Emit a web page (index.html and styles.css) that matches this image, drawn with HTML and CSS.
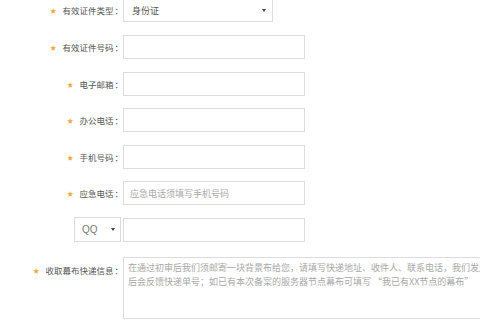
FILE: index.html
```html
<!DOCTYPE html>
<html lang="zh-CN">
<head>
<meta charset="utf-8">
<link rel="stylesheet" href="styles.css">
</head>
<body>
<form class="form">
  <div class="row">
    <label class="label"><span class="star">★</span>有效证件类型<span class="colon">：</span></label>
    <div class="select select-wide"><span class="select-text">身份证</span></div>
  </div>
  <div class="row">
    <label class="label"><span class="star">★</span>有效证件号码<span class="colon">：</span></label>
    <input class="input" type="text">
  </div>
  <div class="row">
    <label class="label"><span class="star">★</span>电子邮箱<span class="colon">：</span></label>
    <input class="input" type="text">
  </div>
  <div class="row">
    <label class="label"><span class="star">★</span>办公电话<span class="colon">：</span></label>
    <input class="input" type="text">
  </div>
  <div class="row">
    <label class="label"><span class="star">★</span>手机号码<span class="colon">：</span></label>
    <input class="input" type="text">
  </div>
  <div class="row">
    <label class="label"><span class="star">★</span>应急电话<span class="colon">：</span></label>
    <input class="input" type="text" placeholder="应急电话须填写手机号码">
  </div>
  <div class="row">
    <div class="label label-select"><div class="select select-small"><span class="select-text">QQ</span></div></div>
    <input class="input" type="text">
  </div>
  <div class="row row-area">
    <label class="label label-area"><span class="star">★</span>收取幕布快递信息<span class="colon">：</span></label>
    <textarea class="textarea" placeholder="在通过初审后我们须邮寄一块背景布给您，请填写快递地址、收件人、联系电话，我们发送后会反馈快递单号；如已有本次备案的服务器节点幕布可填写 “我已有XX节点的幕布”"></textarea>
  </div>
</form>
</body>
</html>
```

FILE: styles.css
```css
html, body {
  margin: 0;
  padding: 0;
  background: #ffffff;
  width: 480px;
  height: 320px;
  overflow: hidden;
}

body {
  font-family: "Noto Sans CJK SC", "Noto Sans", sans-serif;
  color: #555555;
}

.form {
  display: flex;
  flex-direction: column;
  gap: 12.6px;
  margin-top: -1.6px;
}

.row {
  display: flex;
  align-items: center;
  height: 24px;
}

.row-area {
  align-items: flex-start;
  height: auto;
  margin-top: 2.4px;
}

.label {
  width: 123px;
  flex: none;
  text-align: right;
  font-size: 8.5px;
  line-height: 24px;
  color: #555555;
  white-space: nowrap;
}

.colon {
  font-family: "Noto Sans CJK TC", "Noto Sans CJK SC", sans-serif;
  margin-left: 1px;
}

.label-area {
  line-height: 14px;
  padding-top: 6px;
}

.label-select {
  display: flex;
  justify-content: flex-end;
  padding-right: 2px;
  box-sizing: border-box;
}

.star {
  color: #f0a83c;
  font-size: 6.5px;
  margin-right: 6px;
  vertical-align: 1px;
}

.input {
  box-sizing: border-box;
  flex: none;
  width: 182px;
  height: 24px;
  margin: 0;
  border: 1px solid #dcdcdc;
  padding: 0 6px;
  font-family: "Noto Sans CJK SC", "Noto Sans", sans-serif;
  font-size: 9px;
  color: #555555;
  background: #ffffff;
  outline: none;
}

.input::placeholder,
.textarea::placeholder {
  color: #a8a8a8;
}

.select {
  box-sizing: border-box;
  flex: none;
  position: relative;
  height: 24px;
  border: 1px solid #dcdcdc;
  background: #ffffff;
  display: flex;
  align-items: center;
  font-size: 9px;
  color: #555555;
}

.select::after {
  content: "";
  position: absolute;
  right: 6px;
  top: 10px;
  border-left: 2.5px solid transparent;
  border-right: 2.5px solid transparent;
  border-top: 3.5px solid #444444;
}

.select-wide {
  width: 150px;
  padding-left: 8px;
}

.select-small {
  width: 47px;
  height: 25px;
  padding-left: 7px;
  font-family: "Liberation Sans", sans-serif;
  font-size: 10px;
  color: #7a7a7a;
}

.select-small::after {
  right: 5px;
}

.textarea {
  box-sizing: border-box;
  flex: none;
  width: 375px;
  height: 62px;
  margin: 0;
  border: 1px solid #dcdcdc;
  padding: 3px 4px;
  font-family: "Noto Sans CJK SC", "Noto Sans", sans-serif;
  font-size: 9px;
  line-height: 14px;
  color: #555555;
  resize: none;
  outline: none;
  overflow: hidden;
}
```
